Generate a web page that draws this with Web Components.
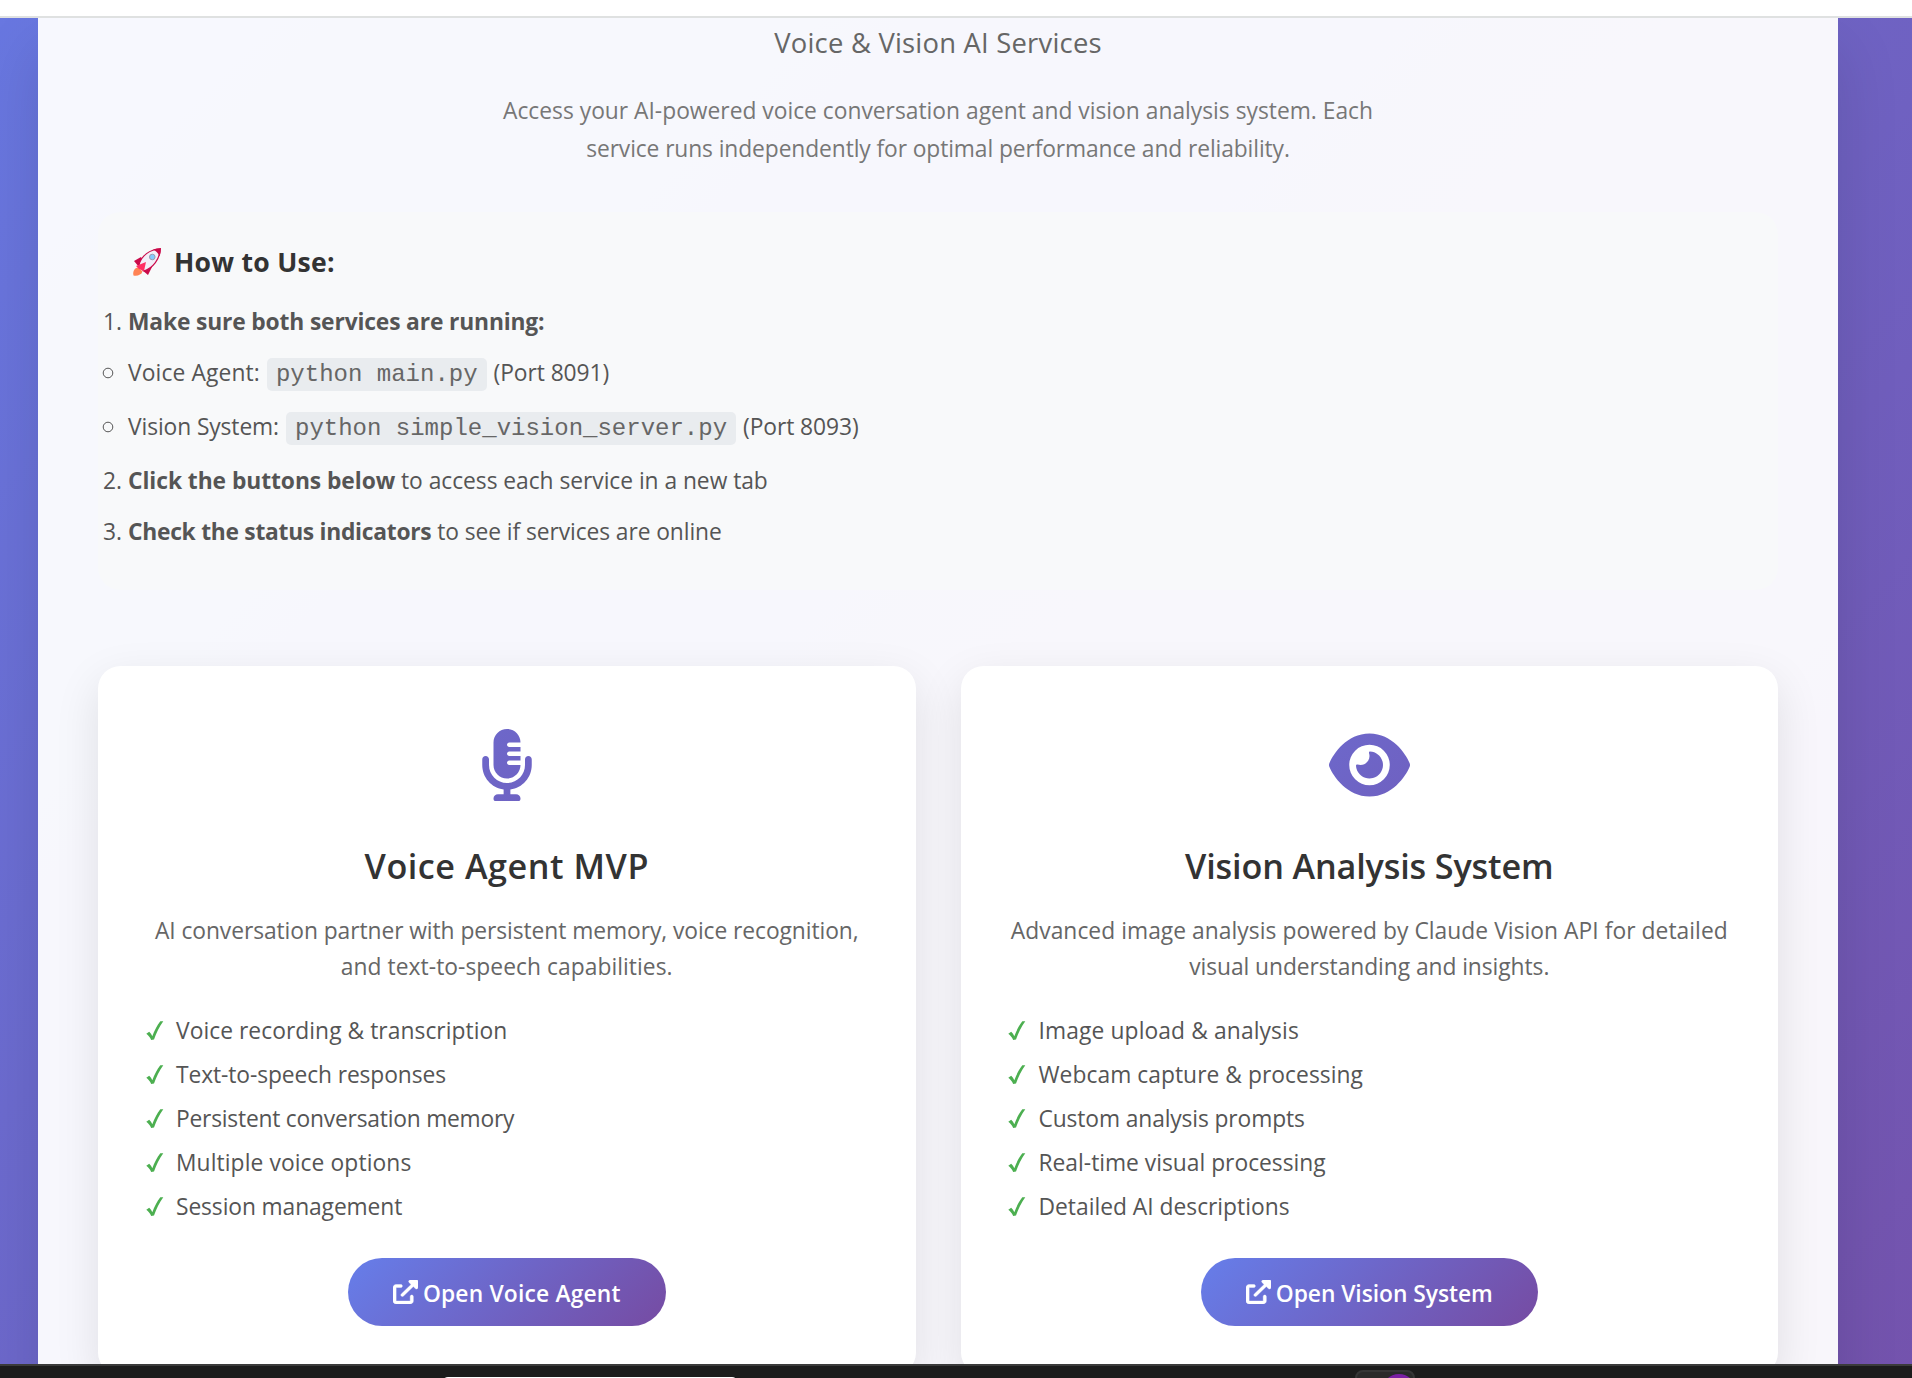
<!DOCTYPE html>
<html lang="en">
<head>
<meta charset="utf-8">
<title>Voice &amp; Vision AI Services</title>
<style>
  body {
    margin: 0;
    font-family: "Open Sans", "Noto Sans", sans-serif;
    font-size: 22.8px;
    color: #555;
  }
</style>
</head>
<body>
<service-dashboard></service-dashboard>

<script>
class ServiceDashboard extends HTMLElement {
  constructor() {
    super();
    this.attachShadow({ mode: 'open' });
    this.shadowRoot.innerHTML = `<style>
                                  :host {
                                    display: flex;
                                    flex-direction: column;
                                    height: 1378px;
                                    overflow: hidden;
                                  }

                                  .top {
                                    height: 16px;
                                    background: white;
                                    border-bottom: 2px solid #dfe1e1;
                                  }

                                  main {
                                    flex: 1;
                                    min-height: 0;
                                    overflow: hidden;
                                    background: linear-gradient(135deg, #667eea 0%, #764ba2 100%) 0 -620px / 1912px 2680px no-repeat;
                                  }

                                  .panel {
                                    box-sizing: border-box;
                                    width: 1800px;
                                    height: 1500px;
                                    margin-left: 38px;
                                    padding: 3px 60px 0;
                                    background: rgba(255, 255, 255, .95);
                                    box-shadow: 0 30px 60px rgba(0, 0, 0, .12);
                                  }

                                  header {
                                    text-align: center;
                                  }

                                  h1 {
                                    margin: 0 0 27px;
                                    font-size: 27.4px;
                                    font-weight: 400;
                                    line-height: 44px;
                                    letter-spacing: .22px;
                                    color: #666;
                                  }

                                  header p {
                                    margin: 0 0 43px;
                                    line-height: 38.4px;
                                    color: #777;
                                  }

                                  .cards {
                                    display: grid;
                                    grid-template-columns: 1fr 1fr;
                                    gap: 45px;
                                    margin-top: 76px;
                                  }
                                 </style>
                                 <div class="top"></div>
                                 <main>
                                  <div class="panel">
                                    <header>
                                      <h1>Voice &amp; Vision AI Services</h1>
                                      <p><span>Access your AI-powered voice conversation agent and vision analysis system. Each</span><br><span style="letter-spacing: -.1px">service runs independently for optimal performance and reliability.</span></p>
                                    </header>
                                    <how-to-use></how-to-use>
                                    <div class="cards">
                                      <service-card icon="mic" title-text="Voice Agent MVP" action="Open Voice Agent"
                                        style="--title-spacing: .53px; --action-spacing: .18px"
                                        features="Voice recording &amp; transcription|Text-to-speech responses|Persistent conversation memory|Multiple voice options|Session management"
                                        spacing=".05|-.1|-.22|.1|-.1">
                                        <span style="letter-spacing: -.065px">AI conversation partner with persistent memory, voice recognition,</span><br><span style="letter-spacing: .05px">and text-to-speech capabilities.</span>
                                      </service-card>
                                      <service-card icon="eye" title-text="Vision Analysis System" action="Open Vision System"
                                        style="--title-spacing: -.15px; --action-spacing: -.04px"
                                        features="Image upload &amp; analysis|Webcam capture &amp; processing|Custom analysis prompts|Real-time visual processing|Detailed AI descriptions"
                                        spacing=".12|.05|-.12|0|0">
                                        <span style="letter-spacing: .05px">Advanced image analysis powered by Claude Vision API for detailed</span><br><span style="letter-spacing: -.06px">visual understanding and insights.</span>
                                      </service-card>
                                    </div>
                                  </div>
                                 </main>
                                 <task-bar></task-bar>`
  }
}

class HowToUse extends HTMLElement {
  constructor() {
    super();
    this.attachShadow({ mode: 'open' });
    this.shadowRoot.innerHTML = `<style>
                                  :host {
                                    display: block;
                                    box-sizing: border-box;
                                    height: 378px;
                                    padding-top: 29px;
                                    background: #f8f9fa;
                                    border-radius: 22.5px;
                                  }

                                  h3 {
                                    display: flex;
                                    align-items: center;
                                    gap: 13px;
                                    margin: 0 0 21.5px 35px;
                                    font-size: 26.6px;
                                    font-weight: 700;
                                    line-height: 42px;
                                    letter-spacing: .25px;
                                    color: #333;
                                  }

                                  .steps {
                                    display: grid;
                                    grid-template-rows: 50.5px 54px 54px 51.5px 36px;
                                  }

                                  .row {
                                    display: flex;
                                    line-height: 36px;
                                    white-space: pre;
                                  }

                                  .mark {
                                    width: 25px;
                                    margin-left: 5px;
                                  }

                                  .mark svg {
                                    display: block;
                                    margin: 12px 0 0 -1px;
                                  }

                                  code {
                                    height: 33px;
                                    margin: 3px 7px 0;
                                    padding: 0 9px;
                                    border-radius: 5px;
                                    background: #e9ecef;
                                    color: #666;
                                    font: 24px/34px "Liberation Mono", monospace;
                                    letter-spacing: 0;
                                  }
                                 </style>
                                 <h3>
                                  <svg width="28" height="28" viewBox="0 0 28 28">
                                    <path d="M0.500 27.500c-1-4 1-8 5-8l4 4c-1 3-5 5-9 4z" fill="#ff8354"/>
                                    <path d="M1 13l7-4 3 5-5 5zM15 27l4-8-5-3-5 6z" fill="#ca0b4a"/>
                                    <path d="M6 17C8 8 17 1 27 1c0 10-7 19-16 22z" fill="#f3eef8" stroke="#ca0b4a" stroke-width="1.2"/>
                                    <path d="M20 1.500Q24 0 28 0Q28 5 26.500 8.500Q25 4 20 1.500z" fill="#ca0b4a"/>
                                    <path d="M3 18l10-4-2 9-5-2z" fill="#ff2e63"/>
                                    <circle cx="19.300" cy="9" r="2.800" fill="#83cbff" stroke="#9a9bb0"/>
                                  </svg><span>How to Use:</span></h3>
                                 <div class="steps">
                                  <div class="row"><span class="mark">1.</span><b style="letter-spacing: -.15px">Make sure both services are running:</b></div>
                                  <div class="row"><span class="mark"><svg width="12" height="12"><circle cx="6" cy="6" r="4.800" fill="none" stroke="#555"/></svg></span><span style="letter-spacing: .13px">Voice Agent:</span><code>python main.py</code><span style="letter-spacing: -.08px">(Port 8091)</span></div>
                                  <div class="row"><span class="mark"><svg width="12" height="12"><circle cx="6" cy="6" r="4.800" fill="none" stroke="#555"/></svg></span><span style="letter-spacing: -.1px">Vision System:</span><code>python simple_vision_server.py</code><span style="letter-spacing: -.08px">(Port 8093)</span></div>
                                  <div class="row"><span class="mark">2.</span><b style="letter-spacing: -.06px">Click the buttons below</b><span style="letter-spacing: -.04px"> to access each service in a new tab</span></div>
                                  <div class="row"><span class="mark">3.</span><b style="letter-spacing: -.27px">Check the status indicators</b><span style="letter-spacing: -.08px"> to see if services are online</span></div>
                                 </div>`
  }
}

const icons = {
  mic: `<svg width="54" height="72" viewBox="0 0 384 512"><path fill="url(#g)" d="M96 96V256c0 53 43 96 96 96s96-43 96-96H208c-8.800 0-16-7.200-16-16s7.200-16 16-16h80V192H208c-8.800 0-16-7.200-16-16s7.200-16 16-16h80V128H208c-8.800 0-16-7.200-16-16s7.200-16 16-16h80c0-53-43-96-96-96S96 43 96 96zM320 240v16c0 70.700-57.300 128-128 128s-128-57.300-128-128V216c0-13.300-10.700-24-24-24s-24 10.700-24 24v40c0 89.100 66.200 162.700 152 174.400V464H128c-17.700 0-32 12-32 30 0 10 4 18 10 18h172c6 0 10-8 10-18 0-18-14.300-30-32-30H216V430.400c85.800-11.700 152-85.300 152-174.400V216c0-13.300-10.700-24-24-24s-24 10.700-24 24v24z"/></svg>`,
  eye: `<svg width="81" height="72" viewBox="0 0 576 512"><path fill="url(#g)" d="M288 32c-80.800 0-145.500 36.800-192.600 80.600C48.600 156 17.300 208 2.500 243.700c-3.300 7.900-3.300 16.700 0 24.600C17.300 304 48.600 356 95.400 399.400C142.500 443.200 207.200 480 288 480s145.500-36.800 192.600-80.600c46.800-43.500 78.100-95.400 93-131.100c3.300-7.900 3.300-16.700 0-24.600c-14.900-35.700-46.200-87.700-93-131.100C433.500 68.800 368.800 32 288 32zM144 256a144 144 0 1 1 288 0 144 144 0 1 1 -288 0zm144-64c0 35.300-28.700 64-64 64c-7.100 0-13.900-1.200-20.300-3.300c-5.500-1.800-11.900 1.600-11.700 7.400c.3 6.900 1.300 13.800 3.200 20.700c13.700 51.200 66.400 81.600 117.600 67.900s81.600-66.400 67.900-117.600c-11.100-41.500-47.800-69.400-88.600-71.100c-5.800-.2-9.200 6.100-7.400 11.700c2.100 6.400 3.300 13.200 3.300 20.300z"/></svg>`
}

class ServiceCard extends HTMLElement {
  connectedCallback() {
    this.attachShadow({ mode: 'open' });
    const spacing = this.getAttribute('spacing').split('|')
    const features = this.getAttribute('features').split('|').map((text, i) =>
      `<li><svg width="18" height="20" viewBox="0 0 18 20"><path d="M.3 12.800L3.200 10.800C4.600 12 5.600 13.500 6.300 15.200C8.500 9.500 11 4.500 14.300.3L17.300.3C13.300 6 10.300 12 8 18.600L5.200 19C4 16.300 2.300 14.300.3 12.800z" fill="#4caf50"/></svg><span style="letter-spacing: ${spacing[i]}px">${text.replace('&', '&amp;')}</span></li>`).join('')
    this.shadowRoot.innerHTML = `<style>
                                  :host {
                                    display: flex;
                                    flex-direction: column;
                                    align-items: center;
                                    box-sizing: border-box;
                                    height: 709px;
                                    padding: 63px 48px 0;
                                    background: white;
                                    border-radius: 22.5px;
                                    box-shadow: 0 15px 45px rgba(0, 0, 0, .1);
                                  }

                                  h2 {
                                    margin: 38px 0 20px;
                                    font-size: 34.2px;
                                    font-weight: 600;
                                    line-height: 54px;
                                    letter-spacing: var(--title-spacing);
                                    color: #333;
                                  }

                                  p {
                                    margin: 0 0 24px;
                                    line-height: 36px;
                                    text-align: center;
                                    white-space: nowrap;
                                    color: #666;
                                  }

                                  ul {
                                    align-self: stretch;
                                    margin: 0 0 29px;
                                    padding: 0;
                                    list-style: none;
                                  }

                                  li {
                                    display: flex;
                                    align-items: center;
                                    gap: 12px;
                                    height: 44px;
                                  }

                                  li svg {
                                    margin-left: -.5px;
                                    margin-right: .5px;
                                  }

                                  a {
                                    display: flex;
                                    align-items: center;
                                    gap: 5px;
                                    box-sizing: border-box;
                                    height: 68px;
                                    padding: 3px 45px 0;
                                    border-radius: 37.5px;
                                    background: linear-gradient(135deg, #667eea 0%, #764ba2 100%);
                                    color: white;
                                    font-weight: 600;
                                    letter-spacing: var(--action-spacing);
                                  }

                                  a svg {
                                    margin-bottom: 2px;
                                  }
                                 </style>
                                 <svg width="0" height="0" style="position:absolute"><linearGradient id="g" gradientUnits="userSpaceOnUse" x1="-1700" y1="-1700" x2="2200" y2="2200"><stop stop-color="#667eea"/><stop offset="1" stop-color="#764ba2"/></linearGradient></svg>
                                 ${icons[this.getAttribute('icon')]}
                                 <h2>${this.getAttribute('title-text')}</h2>
                                 <p><slot></slot></p>
                                 <ul>${features}</ul>
                                 <a><svg width="25" height="24" viewBox="0 0 512 512" preserveAspectRatio="none"><path fill="white" stroke="white" stroke-width="8" d="M384 320c-17.670 0-32 14.330-32 32v96H64V160h96c17.670 0 32-14.320 32-32s-14.330-32-32-32H64c-35.350 0-64 28.650-64 64V448c0 35.340 28.650 64 64 64h288c35.350 0 64-28.660 64-64v-96C416 334.300 401.700 320 384 320zM488 0H352c-12.940 0-24.620 7.797-29.560 19.750c-4.969 11.970-2.219 25.720 6.938 34.880L370.800 96L169.400 297.400c-12.500 12.500-12.500 32.750 0 45.250C175.600 348.900 183.800 352 192 352s16.380-3.125 22.620-9.375L416 141.300l41.380 41.380c9.156 9.141 22.880 11.840 34.880 6.938C504.200 184.600 512 172.900 512 160V24C512 10.740 501.300 0 488 0z"/></svg><span>${this.getAttribute('action')}</span></a>`
  }
}

class TaskBar extends HTMLElement {
  constructor() {
    super();
    this.attachShadow({ mode: 'open' });
    this.shadowRoot.innerHTML = `<style>
                                  :host {
                                    display: flex;
                                    box-sizing: border-box;
                                    height: 14px;
                                    overflow: hidden;
                                    background: #1c1c1c;
                                    border-top: 2px solid #3b3b3b;
                                  }

                                  .search {
                                    width: 296px;
                                    height: 48px;
                                    margin: 11px 0 0 442px;
                                    border-radius: 6px;
                                    background: white;
                                  }

                                  .app {
                                    box-sizing: border-box;
                                    width: 60px;
                                    height: 60px;
                                    margin: 4px 0 0 617px;
                                    padding: 2px 0 0 25px;
                                    border: 2px solid #363636;
                                    border-radius: 8px;
                                    background: #2a2a2a;
                                  }

                                  .app i {
                                    display: block;
                                    width: 34px;
                                    height: 34px;
                                    border-radius: 50%;
                                    background: #7b1fa2;
                                  }
                                 </style>
                                 <div class="search"></div>
                                 <div class="app"><i></i></div>`
  }
}

customElements.define("service-dashboard", ServiceDashboard);
customElements.define("how-to-use", HowToUse);
customElements.define("service-card", ServiceCard);
customElements.define("task-bar", TaskBar);
</script>
</body>
</html>
